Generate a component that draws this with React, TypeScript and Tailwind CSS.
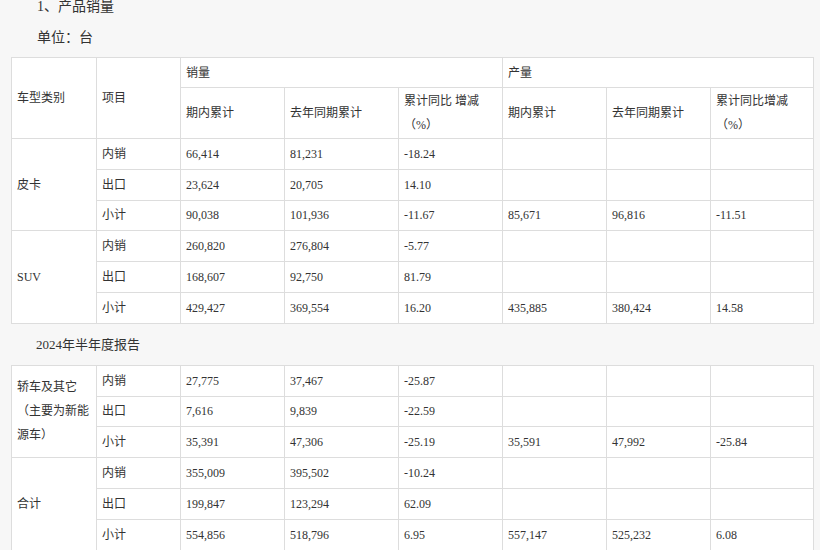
const cols = [85, 84, 104, 114, 104, 104, 104, 103];

type Group = { name: string; rows: string[][] };

const top: Group[] = [
  {
    name: "皮卡",
    rows: [
      ["内销", "66,414", "81,231", "-18.24", "", "", ""],
      ["出口", "23,624", "20,705", "14.10", "", "", ""],
      ["小计", "90,038", "101,936", "-11.67", "85,671", "96,816", "-11.51"],
    ],
  },
  {
    name: "SUV",
    rows: [
      ["内销", "260,820", "276,804", "-5.77", "", "", ""],
      ["出口", "168,607", "92,750", "81.79", "", "", ""],
      ["小计", "429,427", "369,554", "16.20", "435,885", "380,424", "14.58"],
    ],
  },
];

const bottom: Group[] = [
  {
    name: "轿车及其它（主要为新能源车）",
    rows: [
      ["内销", "27,775", "37,467", "-25.87", "", "", ""],
      ["出口", "7,616", "9,839", "-22.59", "", "", ""],
      ["小计", "35,391", "47,306", "-25.19", "35,591", "47,992", "-25.84"],
    ],
  },
  {
    name: "合计",
    rows: [
      ["内销", "355,009", "395,502", "-10.24", "", "", ""],
      ["出口", "199,847", "123,294", "62.09", "", "", ""],
      ["小计", "554,856", "518,796", "6.95", "557,147", "525,232", "6.08"],
    ],
  },
];

const td = "border border-[#dddddd] px-[5px] text-left align-middle";

function Colgroup() {
  return (
    <colgroup>
      {cols.map((w, i) => (
        <col key={i} style={{ width: w }} />
      ))}
    </colgroup>
  );
}

function Body({ groups }: { groups: Group[] }) {
  return (
    <tbody>
      {groups.map((g) =>
        g.rows.map((r, i) => (
          <tr key={g.name + i} className="h-[30.8px]">
            {i === 0 && (
              <td rowSpan={3} className={td + " leading-[24px]"}>
                {g.name}
              </td>
            )}
            {r.map((c, j) => (
              <td key={j} className={td}>
                {c}
              </td>
            ))}
          </tr>
        ))
      )}
    </tbody>
  );
}

export default function App() {
  return (
    <div
      className="w-[820px] h-[550px] overflow-hidden bg-[#f7f7f7] text-[12px] text-[#333]"
      style={{ fontFamily: '"Liberation Serif", "Noto Sans CJK SC", serif' }}
    >
      <div className="pl-[37px] text-[14px] leading-[14px] h-[31px]">1、产品销量</div>
      <div className="pl-[37px] text-[14px] leading-[14px] h-[26px]">单位：台</div>
      <table className="ml-[11px] border-collapse bg-white table-fixed w-[802px]">
        <Colgroup />
        <thead className="font-normal">
          <tr className="h-[30px]">
            <td rowSpan={2} className={td}>车型类别</td>
            <td rowSpan={2} className={td}>项目</td>
            <td colSpan={3} className={td}>销量</td>
            <td colSpan={3} className={td}>产量</td>
          </tr>
          <tr className="h-[51px]">
            <td className={td}>期内累计</td>
            <td className={td}>去年同期累计</td>
            <td className={td + " leading-[24px]"}>累计同比 增减（%）</td>
            <td className={td}>期内累计</td>
            <td className={td}>去年同期累计</td>
            <td className={td + " leading-[24px]"}>累计同比增减（%）</td>
          </tr>
        </thead>
        <Body groups={top} />
      </table>
      <div className="pl-[36px] text-[13px] leading-[14px] pt-[14px] h-[41px]">2024年半年度报告</div>
      <table className="ml-[11px] border-collapse bg-white table-fixed w-[802px]">
        <Colgroup />
        <Body groups={bottom} />
      </table>
    </div>
  );
}
